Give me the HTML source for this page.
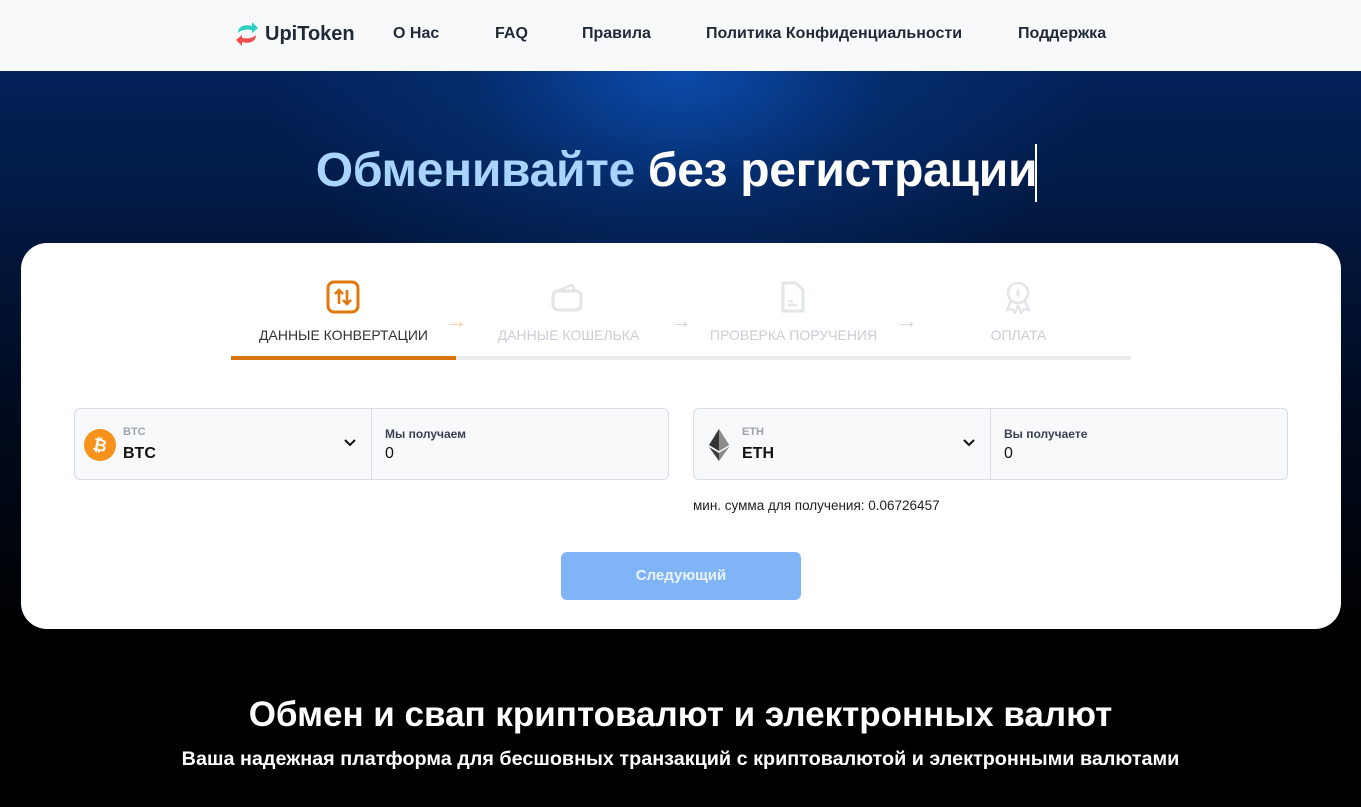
<!DOCTYPE html>
<html><head><meta charset="utf-8"><style>
*{margin:0;padding:0;box-sizing:border-box}
body{width:1361px;height:807px;overflow:hidden;font-family:"Liberation Sans",sans-serif;background:#000;position:relative}
.nav{position:absolute;left:0;top:0;width:1361px;height:71px;background:#f8f9fb}
.nav a{position:absolute;top:25px;font-size:16px;font-weight:bold;color:#1f2937;text-decoration:none}
.hero{position:absolute;left:0;top:71px;width:1361px;height:736px;background:radial-gradient(ellipse 420px 260px at 680px 0px,rgba(12,80,180,0.9) 0%,rgba(6,54,128,0.5) 50%,rgba(0,0,0,0) 100%),linear-gradient(180deg,#03225a 0px,#021a45 120px,#010d25 300px,#000 560px)}
h1{position:absolute;top:143px;left:0;width:1361px;text-align:center;font-size:48px;font-weight:bold;color:#fff;letter-spacing:-0.3px;padding-right:8px}
h1 span{color:#a8d4ff}
.card{position:absolute;left:21px;top:243px;width:1320px;height:386px;background:#fff;border-radius:26px}
.step{position:absolute;top:327px;font-size:14px;color:#c9ced6;text-align:center}
.box{position:absolute;top:408px;height:72px;background:#f8f9fb;border:1px solid #d9dce2;border-radius:6px}
.sm{position:absolute;font-size:11px;color:#9ca3af;font-weight:bold}
.big{position:absolute;font-size:16px;color:#111;font-weight:bold}
.lbl{position:absolute;top:18px;font-size:12px;font-weight:bold;color:#374151}
.val{position:absolute;top:36px;font-size:16px;color:#111}
.arr{position:absolute;top:308px;font-size:22px}
</style></head><body>
<div class="nav">
<svg style="position:absolute;left:235px;top:21px" width="24" height="26" viewBox="0 0 24 26"><path d="M3 12 C3 5 10 3 17 5 L17 1 L23 7 L17 12 L17 9 C11 8 6 9 3 12Z" fill="#2fd0c0"/><path d="M21 14 C21 21 14 23 7 21 L7 25 L1 19 L7 14 L7 17 C13 18 18 17 21 14Z" fill="#f04e4e"/></svg>
<a style="left:265px;top:23px;font-size:20px;color:#1f2937">UpiToken</a>
<a style="left:393px">О Нас</a><a style="left:495px">FAQ</a><a style="left:582px">Правила</a><a style="left:706px">Политика Конфиденциальности</a><a style="left:1018px">Поддержка</a>
</div>
<div class="hero"></div>
<h1><span>Обменивайте</span> без регистрации</h1>
<div style="position:absolute;left:1035px;top:144px;width:2px;height:58px;background:#fff"></div>
<div class="card"></div>
<svg style="position:absolute;left:326px;top:280px" width="34" height="34" viewBox="0 0 34 34"><rect x="2" y="2" width="30" height="30" rx="6" fill="none" stroke="#e07a10" stroke-width="3"/><path d="M13 24V10M9 14l4-4 4 4M21 10v14M17 20l4 4 4-4" fill="none" stroke="#e07a10" stroke-width="2.6"/></svg>
<svg style="position:absolute;left:550px;top:282px" width="34" height="30" viewBox="0 0 34 30"><path d="M4 10 L22 3 L25 9" fill="none" stroke="#e3e5e9" stroke-width="2.5"/><rect x="3" y="9" width="28" height="19" rx="5" fill="none" stroke="#e3e5e9" stroke-width="3"/></svg>
<svg style="position:absolute;left:780px;top:280px" width="26" height="34" viewBox="0 0 26 34"><path d="M3 3h13l7 7v21H3z" fill="none" stroke="#e3e5e9" stroke-width="3"/><path d="M8 21h5M8 25h9" stroke="#e3e5e9" stroke-width="2.5"/></svg>
<svg style="position:absolute;left:1002px;top:280px" width="32" height="34" viewBox="0 0 32 34"><circle cx="16" cy="13" r="10" fill="none" stroke="#e3e5e9" stroke-width="2.5"/><path d="M16 8l2 5-2 5-2-5z" fill="#e3e5e9"/><path d="M9 21l-4 9 5-1 3 4 3-8M23 21l4 9-5-1-3 4-3-8" fill="none" stroke="#e3e5e9" stroke-width="2.3"/></svg>
<div class="step" style="left:231px;width:225px;color:#333">ДАННЫЕ КОНВЕРТАЦИИ</div>
<div class="step" style="left:456px;width:225px">ДАННЫЕ КОШЕЛЬКА</div>
<div class="step" style="left:681px;width:225px">ПРОВЕРКА ПОРУЧЕНИЯ</div>
<div class="step" style="left:906px;width:225px">ОПЛАТА</div>
<div class="arr" style="left:445px;color:#fbcf9f">→</div>
<div class="arr" style="left:670px;color:#d1d5db">→</div>
<div class="arr" style="left:896px;color:#d1d5db">→</div>
<div style="position:absolute;left:231px;top:356px;width:900px;height:4px;background:#ebedf0"></div>
<div style="position:absolute;left:231px;top:356px;width:225px;height:4px;background:#d97310"></div>

<div class="box" style="left:74px;width:595px">
<svg style="position:absolute;left:9px;top:20px" width="32" height="32" viewBox="0 0 32 32"><circle cx="16" cy="16" r="16" fill="#f7931a"/><text x="16" y="22" text-anchor="middle" font-family="Liberation Sans" font-weight="bold" font-size="17" fill="#fff" transform="rotate(12 16 16)">₿</text></svg>
<div class="sm" style="left:48px;top:17px">BTC</div><div class="big" style="left:48px;top:36px">BTC</div>
<svg style="position:absolute;left:269px;top:30px" width="12" height="8" viewBox="0 0 12 8"><path d="M1 1l5 5 5-5" fill="none" stroke="#111" stroke-width="2"/></svg>
<div style="position:absolute;left:296px;top:0;width:1px;height:70px;background:#d9dce2"></div>
<div class="lbl" style="left:310px">Мы получаем</div><div class="val" style="left:310px">0</div>
</div>
<div class="box" style="left:693px;width:595px">
<svg style="position:absolute;left:14px;top:19px" width="22" height="34" viewBox="0 0 22 34"><path d="M11 1L1 17l10 6 10-6z" fill="#343434"/><path d="M11 1v22l10-6z" fill="#8c8c8c"/><path d="M1 19l10 14 10-14-10 6z" fill="#3c3c3b"/><path d="M11 25v8l10-14z" fill="#8c8c8c"/></svg>
<div class="sm" style="left:48px;top:17px">ETH</div><div class="big" style="left:48px;top:36px">ETH</div>
<svg style="position:absolute;left:269px;top:30px" width="12" height="8" viewBox="0 0 12 8"><path d="M1 1l5 5 5-5" fill="none" stroke="#111" stroke-width="2"/></svg>
<div style="position:absolute;left:296px;top:0;width:1px;height:70px;background:#d9dce2"></div>
<div class="lbl" style="left:310px">Вы получаете</div><div class="val" style="left:310px">0</div>
</div>
<div style="position:absolute;left:693px;top:498px;font-size:13.5px;color:#222">мин. сумма для получения: 0.06726457</div>
<div style="position:absolute;left:561px;top:552px;width:240px;height:48px;background:#7fb4f7;border-radius:6px;color:#eaf3ff;font-weight:bold;font-size:15px;text-align:center;line-height:48px">Следующий</div>
<div style="position:absolute;top:695px;width:1361px;text-align:center;color:#fff;font-weight:bold;font-size:35px">Обмен и свап криптовалют и электронных валют</div>
<div style="position:absolute;top:748px;width:1361px;text-align:center;color:#fff;font-size:19.8px;font-weight:bold">Ваша надежная платформа для бесшовных транзакций с криптовалютой и электронными валютами</div>
</body></html>
